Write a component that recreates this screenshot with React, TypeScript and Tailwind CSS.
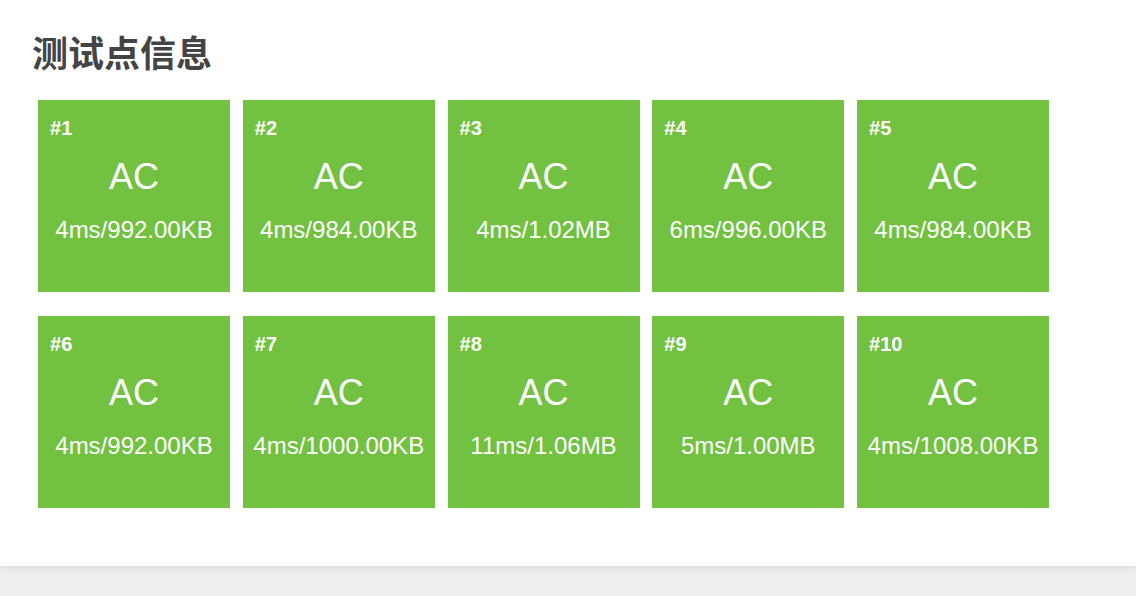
const cases = [
  { id: 1, status: 'AC', usage: '4ms/992.00KB' },
  { id: 2, status: 'AC', usage: '4ms/984.00KB' },
  { id: 3, status: 'AC', usage: '4ms/1.02MB' },
  { id: 4, status: 'AC', usage: '6ms/996.00KB' },
  { id: 5, status: 'AC', usage: '4ms/984.00KB' },
  { id: 6, status: 'AC', usage: '4ms/992.00KB' },
  { id: 7, status: 'AC', usage: '4ms/1000.00KB' },
  { id: 8, status: 'AC', usage: '11ms/1.06MB' },
  { id: 9, status: 'AC', usage: '5ms/1.00MB' },
  { id: 10, status: 'AC', usage: '4ms/1008.00KB' },
];

function CaseCard({ id, status, usage }: { id: number; status: string; usage: string }) {
  return (
    <div className="flex h-[192px] w-[192px] flex-col bg-[#72c140] text-white">
      <div className="pl-3 pt-[18px] text-[20px] font-bold leading-none">#{id}</div>
      <div className="mt-[21px] text-center text-[36px] leading-none">{status}</div>
      <div className="mt-[23px] text-center text-[24px] leading-none">{usage}</div>
    </div>
  );
}

export default function App() {
  return (
    <div
      className="flex min-h-[596px] flex-col bg-[#eeeeee]"
      style={{ fontFamily: '"Liberation Sans", "Noto Sans CJK SC", sans-serif' }}
    >
      <div className="h-[566px] bg-white px-[38px] pt-[37px] shadow-[0_2px_6px_rgba(0,0,0,0.08)]">
        <h2 className="-ml-[6px] text-[36px] font-bold leading-none text-[#444444]">测试点信息</h2>
        <div className="mt-[27px] grid grid-cols-[repeat(5,192px)] gap-x-[12.75px] gap-y-[24px]">
          {cases.map((c) => (
            <CaseCard key={c.id} {...c} />
          ))}
        </div>
      </div>
    </div>
  );
}
